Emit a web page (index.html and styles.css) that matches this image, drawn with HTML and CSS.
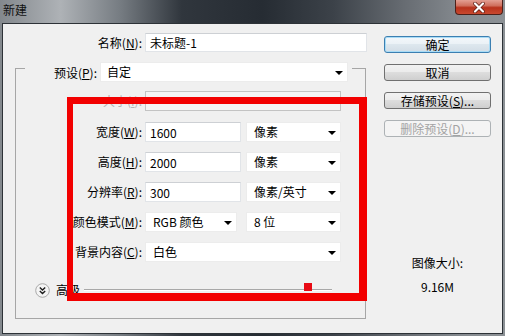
FILE: index.html
```html
<!DOCTYPE html>
<html lang="zh-CN">
<head>
<meta charset="UTF-8">
<title>新建</title>
<link rel="stylesheet" href="styles.css">
</head>
<body>
<div class="window">
    <div class="titlebar">
        <span class="title">新建</span>
        <span class="close">
            <svg width="14" height="11" viewBox="0 0 14 11"><path d="M3 1.5 L11 9.5 M11 1.5 L3 9.5" stroke="#5a1a10" stroke-width="3.6" stroke-linecap="round"/><path d="M3 1.5 L11 9.5 M11 1.5 L3 9.5" stroke="#fff" stroke-width="2.2" stroke-linecap="round"/></svg>
        </span>
    </div>
    <div class="client">
        <div class="main">
            <div class="name-row">
                <label for="docName">名称(<u>N</u>):</label>
                <input type="text" id="docName" class="field name" value="未标题-1">
            </div>
            <div class="group">
                <div class="group-head">
                    <label class="head-label">预设(<u>P</u>):</label>
                    <div class="select preset">自定</div>
                </div>
                <div class="rows">
                    <div class="row first">
                        <label class="disabled">大小(<u>I</u>):</label>
                        <div class="select wide off"></div>
                    </div>
                    <div class="row">
                        <label>宽度(<u>W</u>):</label>
                        <input type="text" class="field num" value="1600">
                        <div class="select unit">像素</div>
                    </div>
                    <div class="row">
                        <label>高度(<u>H</u>):</label>
                        <input type="text" class="field num" value="2000">
                        <div class="select unit">像素</div>
                    </div>
                    <div class="row">
                        <label>分辨率(<u>R</u>):</label>
                        <input type="text" class="field num" value="300">
                        <div class="select unit">像素/英寸</div>
                    </div>
                    <div class="row">
                        <label>颜色模式(<u>M</u>):</label>
                        <div class="select mode">RGB 颜色</div>
                        <div class="select unit bits">8 位</div>
                    </div>
                    <div class="row">
                        <label>背景内容(<u>C</u>):</label>
                        <div class="select wide">白色</div>
                    </div>
                </div>
                <div class="advanced">
                    <span class="adv-btn">
                        <svg width="15" height="15" viewBox="0 0 15 15"><circle cx="7.5" cy="7.5" r="6.8" fill="#f4f4f4" stroke="#a9a9a9"/><path d="M4.8 4.6 L7.5 7 L10.2 4.6 M4.8 8.1 L7.5 10.5 L10.2 8.1" fill="none" stroke="#1c1c1c" stroke-width="1.4"/></svg>
                    </span>
                    <span class="adv-text">高级</span>
                    <span class="adv-line"></span>
                </div>
            </div>
        </div>
        <div class="side">
            <button class="btn default">确定</button>
            <button class="btn">取消</button>
            <button class="btn">存储预设(<u>S</u>)...</button>
            <button class="btn" disabled>删除预设(<u>D</u>)...</button>
            <div class="size-label">图像大小:</div>
            <div class="size-value">9.16M</div>
        </div>
    </div>
    <div class="mark"></div>
    <div class="mark-dot"></div>
</div>
</body>
</html>
```

FILE: styles.css
```css
body {
    margin: 0;
    font-family: "Noto Sans CJK SC", "Microsoft YaHei", sans-serif;
    font-size: 12px;
    color: #000;
}
.window {
    position: relative;
    width: 505px;
    height: 336px;
    box-sizing: border-box;
    padding: 0 2px 2px;
    display: flex;
    flex-direction: column;
    background: linear-gradient(90deg, #83888d 0%, #aeb2b6 12%, #757b81 24%, #30363d 36%, #262c33 52%, #3c4249 66%, #676c72 80%, #878c91 92%, #8c9195 100%);
}
.titlebar {
    height: 23px;
    display: flex;
    justify-content: space-between;
    align-items: flex-start;
}
.title {
    padding: 2px 0 0 1px;
    line-height: 16px;
    color: #111;
}
.close {
    width: 48px;
    height: 15px;
    box-sizing: border-box;
    display: flex;
    align-items: center;
    justify-content: center;
    border: 1px solid #4d2019;
    border-top: none;
    border-radius: 0 0 4px 4px;
    background: linear-gradient(#e3a093 0%, #d0705e 40%, #b8321c 55%, #c9492f 100%);
}
.client {
    flex: 1;
    display: flex;
    border: 1px solid #2d3237;
    background: #f0f0f0;
}
.main {
    width: 364px;
}
.name-row {
    display: flex;
    align-items: center;
    height: 19px;
    margin-top: 9px;
}
.name-row label {
    width: 139px;
    margin-right: 3px;
    text-align: right;
}
.field {
    box-sizing: border-box;
    height: 20px;
    padding: 0 4px;
    border: 1px solid #e1e4e8;
    border-top-color: #cdd0d4;
    background: #fff;
    font-family: inherit;
    font-size: 12px;
    color: #000;
    outline: none;
}
.field.name {
    width: 222px;
    height: 19px;
}
.field.num {
    width: 96px;
}
.group {
    width: 351px;
    box-sizing: border-box;
    margin: 16px 0 0 12px;
    border: 1px solid #a6a6a6;
}
.group-head {
    display: flex;
    align-items: center;
    width: fit-content;
    height: 20px;
    margin: -7px 0 0 9px;
    padding-right: 4px;
    background: #f0f0f0;
}
.head-label {
    width: 72px;
    margin-right: 3px;
    text-align: right;
}
.select {
    box-sizing: border-box;
    height: 20px;
    display: flex;
    align-items: center;
    padding: 0 4px 0 7px;
    background: #fff;
    border: 1px solid #ececec;
    line-height: 16px;
}
.select::after {
    content: "";
    margin-left: auto;
    margin-top: 2px;
    border-left: 4px solid transparent;
    border-right: 4px solid transparent;
    border-top: 4px solid #000;
}
.select.preset {
    width: 248px;
    padding-left: 6px;
}
.select.unit {
    width: 95px;
    margin-left: 5px;
}
.select.mode {
    width: 92px;
}
.select.bits {
    margin-left: 9px;
}
.select.wide {
    width: 196px;
}
.select.off {
    background: #f4f4f4;
    border-color: #c3c3c3;
}
.select.off::after {
    display: none;
}
.rows {
    padding-top: 9px;
    display: flex;
    flex-direction: column;
    gap: 10px;
}
.row {
    display: flex;
    align-items: center;
    height: 20px;
}
.row.first {
    margin-bottom: 1px;
}
.row label {
    width: 126px;
    margin-right: 3px;
    text-align: right;
    line-height: 16px;
}
.row label.disabled {
    color: #b4b4b4;
}
.advanced {
    display: flex;
    align-items: center;
    height: 16px;
    margin: 20px 33px 20px 0;
    padding-left: 19px;
}
.adv-btn {
    width: 15px;
    height: 15px;
    display: flex;
}
.adv-text {
    margin-left: 6px;
    line-height: 16px;
}
.adv-line {
    flex: 1;
    margin-left: 4px;
    border-top: 1px solid #a8a8a8;
    border-bottom: 1px solid #fff;
}
.side {
    width: 107px;
    margin-left: 17px;
    padding-top: 12px;
    display: flex;
    flex-direction: column;
}
.btn {
    height: 17px;
    padding: 0;
    margin-top: 11px;
    font-family: inherit;
    font-size: 12px;
    line-height: 15px;
    color: #000;
    border: 1px solid #707070;
    border-radius: 3px;
    background: linear-gradient(#f2f2f2 0%, #ebebeb 50%, #dddddd 50%, #cfcfcf 100%);
}
.btn.default {
    margin-top: 0;
    border-color: #3c7fb1;
    box-shadow: inset 0 0 0 1px #a9dcf6;
    background: linear-gradient(#f3f7fa 0%, #eaf1f6 50%, #dde7ee 50%, #d2dde6 100%);
}
.btn:disabled {
    color: #a3a3a3;
    border-color: #adb2b5;
    background: #f4f4f4;
}
.size-label {
    margin-top: 118px;
    text-align: center;
    line-height: 16px;
}
.size-value {
    margin-top: 8px;
    text-align: center;
    line-height: 16px;
}
.mark {
    position: absolute;
    left: 67px;
    top: 97px;
    width: 300px;
    height: 204px;
    box-sizing: border-box;
    border: solid #f20000;
    border-width: 7px 8px 8px 6px;
}
.mark-dot {
    position: absolute;
    left: 304px;
    top: 283px;
    width: 8px;
    height: 8px;
    background: #e80a14;
}
```
